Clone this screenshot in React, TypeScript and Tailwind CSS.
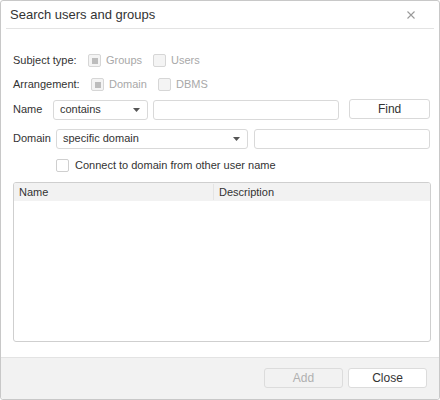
const FONT = "font-['Liberation_Sans',Arial,sans-serif]"

function Check({ checked, disabled }: { checked?: boolean; disabled?: boolean }) {
  return (
    <span
      className={
        'flex h-[13px] w-[13px] shrink-0 items-center justify-center rounded-[2px] border ' +
        (disabled ? 'border-[#d6d6d6] bg-[#f4f4f4]' : 'border-[#cfcfcf] bg-white')
      }
    >
      {checked && <span className="h-[6px] w-[6px] bg-[#bdbdbd]" />}
    </span>
  )
}

function Select({ value, width }: { value: string; width: string }) {
  return (
    <div
      className={
        'flex h-[20px] items-center justify-between rounded-[3px] border border-[#d9d9d9] bg-white pl-[6px] pr-[7px] ' +
        width
      }
    >
      <span>{value}</span>
      <svg width="7" height="4" viewBox="0 0 7 4">
        <path d="M0 0h7L3.5 4z" fill="#555" />
      </svg>
    </div>
  )
}

export default function App() {
  return (
    <div
      className={
        'flex h-[400px] w-[440px] flex-col rounded-[3px] border border-[#c8c8c8] bg-white text-[11px] text-[#333] ' +
        FONT
      }
    >
      {/* Header */}
      <div className="mx-[5px] flex h-[28px] items-center justify-between border-b border-[#e3e3e3] pl-[4px] pr-[19px]">
        <span className="text-[13px] text-[#333]">Search users and groups</span>
        <svg width="8" height="8" viewBox="0 0 8 8">
          <path d="M0.5 0.5l7 7M7.5 0.5l-7 7" stroke="#9a9a9a" strokeWidth="1.1" />
        </svg>
      </div>

      {/* Body */}
      <div className="flex flex-1 flex-col pl-[12px] pr-[9px]">
        <div className="mt-[25px] flex h-[13px] items-center">
          <span className="w-[75px]">Subject type:</span>
          <Check checked disabled />
          <span className="ml-[5px] w-[47px] text-[#a8a8a8]">Groups</span>
          <Check disabled />
          <span className="ml-[5px] text-[#a8a8a8]">Users</span>
        </div>
        <div className="mt-[11px] flex h-[13px] items-center">
          <span className="w-[78px]">Arrangement:</span>
          <Check checked disabled />
          <span className="ml-[5px] w-[49px] text-[#a8a8a8]">Domain</span>
          <Check disabled />
          <span className="ml-[5px] text-[#a8a8a8]">DBMS</span>
        </div>
        <div className="mt-[8px] flex h-[21px] items-center">
          <span className="w-[40px]">Name</span>
          <Select value="contains" width="w-[95px]" />
          <div className="ml-[5px] h-[20px] w-[187px] rounded-[3px] border border-[#d9d9d9]" />
          <div className="ml-[10px] flex h-[20px] w-[81px] -translate-y-[1px] items-center justify-center rounded-[3px] border border-[#d9d9d9] text-[12px]">
            Find
          </div>
        </div>
        <div className="mt-[8px] flex h-[21px] items-center">
          <span className="w-[43px]">Domain</span>
          <Select value="specific domain" width="w-[192px]" />
          <div className="ml-[6px] h-[20px] w-[176px] rounded-[3px] border border-[#d9d9d9]" />
        </div>
        <div className="mt-[10px] flex h-[13px] items-center pl-[43px]">
          <Check />
          <span className="ml-[6px] text-[11px]">Connect to domain from other user name</span>
        </div>
        <div className="mt-[10px] flex h-[160px] w-[418px] flex-col overflow-hidden rounded-[3px] border border-[#cfcfcf]">
          <div className="flex h-[18px] items-center bg-[#f2f2f2]">
            <span className="w-[200px] border-r border-[#e4e4e4] pl-[5px]">Name</span>
            <span className="pl-[5px]">Description</span>
          </div>
        </div>
      </div>

      {/* Footer */}
      <div className="flex h-[42px] justify-end gap-[5px] rounded-b-[3px] border-t border-[#e3e3e3] bg-[#f2f2f2] pr-[12px] pt-[10px]">
        <div className="flex h-[20px] w-[79px] items-center justify-center rounded-[3px] border border-[#dcdcdc] bg-[#f2f2f2] text-[12px] text-[#b0b0b0]">
          Add
        </div>
        <div className="flex h-[20px] w-[79px] items-center justify-center rounded-[3px] border border-[#dcdcdc] bg-white text-[12px]">
          Close
        </div>
      </div>
    </div>
  )
}
